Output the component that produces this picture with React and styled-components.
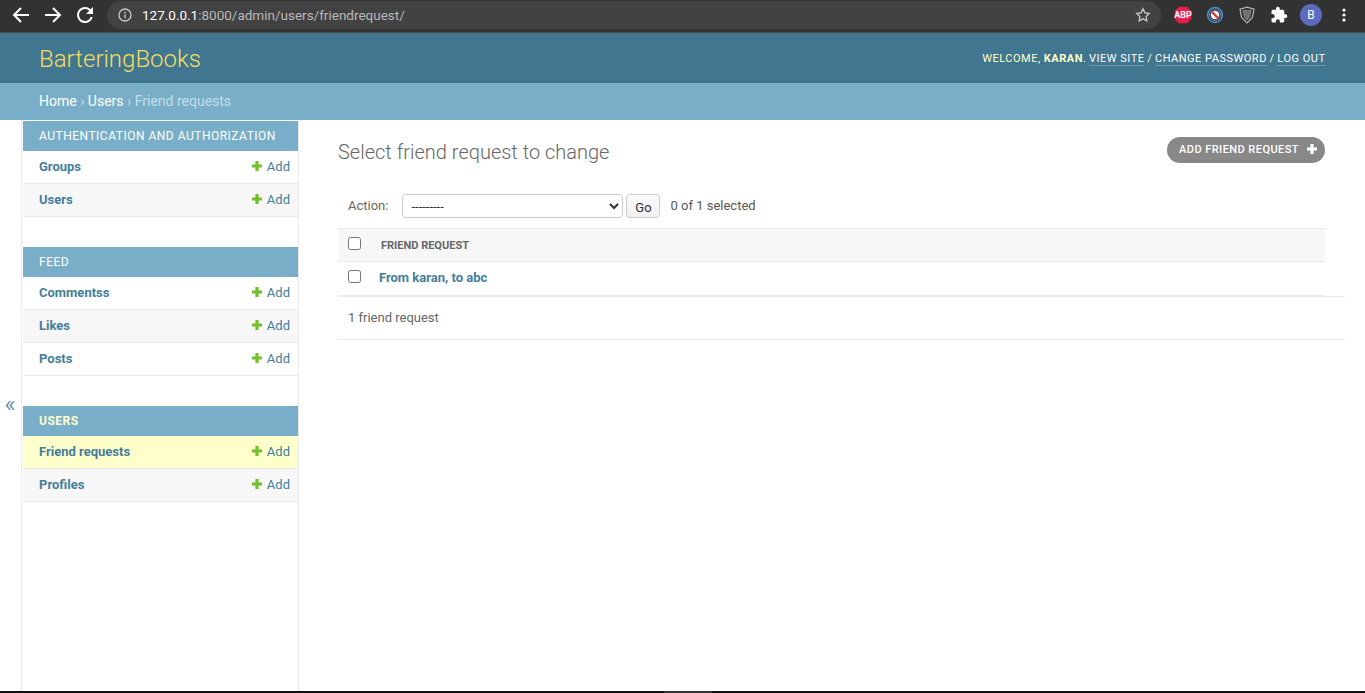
import React from "react";
import styled, { createGlobalStyle } from "styled-components";

const Global = createGlobalStyle`
  html, body { margin: 0; padding: 0; height: 100%; background: #fff; overflow: hidden; }
  body { font-family: Roboto, "Liberation Sans", sans-serif; color: #333; }
  * { box-sizing: border-box; }
`;

const Page = styled.div`
  display: flex;
  flex-direction: column;
  height: 693px;
`;

/* browser toolbar */
const ChromeBar = styled.div`
  height: 33px;
  background: #323232;
  border-bottom: 1px solid #4a4a4a;
  display: flex;
  align-items: center;
  flex: none;
`;
const NavIcons = styled.div`
  width: 107px;
  display: flex;
  align-items: center;
  gap: 8px;
  padding-left: 9px;
  margin-top: -2px;
  flex: none;
`;
const Omnibox = styled.div`
  width: 1054px;
  height: 28px;
  margin-top: -2px;
  border-radius: 14px;
  background: #424242;
  display: flex;
  align-items: center;
  padding: 0 10px 0 11px;
  flex: none;
`;
const Url = styled.div`
  flex: 1;
  margin-left: 10px;
  font: 400 13.5px Roboto, sans-serif;
  color: #b9b9b9;
  b { font-weight: 400; color: #fff; }
`;
const Extensions = styled.div`
  flex: 1;
  display: flex;
  align-items: center;
  padding-left: 13px;
  gap: 14px;
  margin-top: -2px;
`;
const Avatar = styled.div`
  width: 22px;
  height: 22px;
  margin-left: -2px;
  border-radius: 50%;
  background: #5c6bc0;
  color: #fff;
  font-size: 12px;
  display: flex;
  align-items: center;
  justify-content: center;
`;
const Dots = styled.div`
  margin-left: 6px;
  display: flex;
`;

/* django header */
const Header = styled.header`
  height: 50px;
  background: #417690;
  display: flex;
  align-items: center;
  justify-content: space-between;
  padding: 0 40px 0 39px;
  flex: none;
`;
const Brand = styled.h1`
  margin: 2px 0 0;
  font-size: 24px;
  font-weight: 300;
  color: #f5dd5d;
`;
const UserTools = styled.div`
  font-size: 11px;
  letter-spacing: 0.5px;
  text-transform: uppercase;
  white-space: nowrap;
  color: #ffc;
  strong { font-weight: 700; }
`;
const ToolLink = styled.a`
  margin: 0 -0.5px;
  color: #fff;
  border-bottom: 1px solid rgba(255, 255, 255, 0.25);
`;
const Crumbs = styled.div`
  height: 37px;
  background: #79aec8;
  padding: 0 39px 2px;
  display: flex;
  align-items: center;
  font-size: 14px;
  color: #c4dce8;
  flex: none;
  white-space: pre;
  a { color: #fff; }
`;

/* body */
const Main = styled.div`
  flex: 1;
  display: flex;
  min-height: 0;
`;
const Toggle = styled.div`
  width: 22px;
  border-right: 1px solid #eaeaea;
  flex: none;
  display: flex;
  align-items: center;
  justify-content: center;
  color: #447e9b;
  font-size: 24px;
  font-weight: 300;
  padding: 0 1px 3px 0;
`;
const Sidebar = styled.nav`
  width: 277px;
  flex: none;
  border-right: 1px solid #eaeaea;
  padding: 1px 0 0 1px;
`;
const Module = styled.section`
  margin-bottom: 30px;
`;
const Caption = styled.div`
  height: 30px;
  background: #79aec8;
  color: ${p => (p.$current ? "#ffc" : "#fff")};
  font-size: 12px;
  font-weight: ${p => (p.$current ? 700 : 400)};
  letter-spacing: 0.5px;
  text-transform: uppercase;
  display: flex;
  align-items: center;
  padding-left: 16px;
`;
const Row = styled.div`
  height: 33px;
  border-bottom: 1px solid #eaeaea;
  background: ${p => (p.$current ? "#ffc" : p.$alt ? "#f7f7f7" : "#fff")};
  display: flex;
  align-items: center;
  justify-content: space-between;
  padding: 0 8px 2px 16px;
  font-size: 13px;
`;
const RowName = styled.a`
  font-weight: 700;
  color: #447e9b;
`;
const AddLink = styled.a`
  color: #447e9b;
  display: flex;
  align-items: center;
  gap: 5px;
`;
const Content = styled.main`
  flex: 1;
  padding: 0 20px 0 39px;
`;
const TitleRow = styled.div`
  display: flex;
  justify-content: space-between;
  align-items: flex-start;
  padding: 17px 20px 0 0;
  height: 74px;
`;
const Title = styled.h1`
  margin: 3px 0 0;
  font-size: 20px;
  font-weight: 300;
  color: #666;
`;
const AddButton = styled.a`
  height: 26px;
  width: 158px;
  border-radius: 13px;
  background: #888;
  color: #fff;
  font-size: 11px;
  font-weight: 500;
  letter-spacing: 0.45px;
  display: flex;
  align-items: center;
  padding: 0 0 2px 12px;
  gap: 8px;
`;
const Actions = styled.div`
  height: 34px;
  display: flex;
  align-items: center;
  padding: 0 0 10px 10px;
  font-size: 13px;
  color: #666;
`;
const ActionLabel = styled.span`
  margin-bottom: 2px;
`;
const ActionSelect = styled.select`
  width: 221px;
  height: 24px;
  margin-left: 14px;
  padding: 0 4px;
  background: #fff;
  border: 1px solid #ccc;
  border-radius: 4px;
  font: 400 13px Roboto, sans-serif;
  color: #333;
`;
const GoButton = styled.button`
  width: 34px;
  height: 24px;
  margin-left: 3px;
  padding: 2px 0 0;
  background: linear-gradient(#fbfbfb, #f0f0f0);
  border: 1px solid #ccc;
  border-radius: 4px;
  font: 400 13px Roboto, sans-serif;
  color: #333;
`;
const Counter = styled.span`
  margin: 0 0 2px 10px;
  color: #555;
`;
const TableWrap = styled.div`
  margin: 0 20px 0 0;
`;
const HeadRow = styled.div`
  height: 34px;
  border-top: 1px solid #eaeaea;
  border-bottom: 1px solid #eaeaea;
  background: #f7f7f7;
  display: flex;
  align-items: center;
  padding-left: 10px;
  font-size: 11px;
  font-weight: 700;
  color: #666;
  input { margin-bottom: 4px; }
  span { margin-left: 20px; }
`;
const BodyRow = styled.div`
  height: 34px;
  border-bottom: 1px solid #eaeaea;
  display: flex;
  align-items: center;
  padding: 0 0 3px 10px;
  a {
    margin-left: 18px;
    font-size: 13px;
    font-weight: 700;
    color: #447e9b;
  }
`;
const Check = styled.input.attrs({ type: "checkbox" })`
  width: 13px;
  height: 13px;
  margin: 0 0 2px;
`;
const Paginator = styled.div`
  height: 44px;
  border-top: 1px solid #eaeaea;
  border-bottom: 1px solid #eaeaea;
  display: flex;
  align-items: center;
  padding: 0 0 2px 10px;
  font-size: 13px;
  color: #666;
`;
const BottomEdge = styled.div`
  height: 2px;
  flex: none;
  display: flex;
  justify-content: center;
  background: #111;
  padding-left: 11px;
  i { width: 48px; background: #333; }
`;

const Plus = ({ color = "#70bf2b", size = 10 }) => (
  <svg width={size} height={size} viewBox="0 0 10 10">
    <path d="M3.4 0h3.2v3.4H10v3.2H6.6V10H3.4V6.600H0V3.400h3.400z" fill={color} />
  </svg>
);

const Stroke = ({ d }) => (
  <svg width="24" height="24" viewBox="0 0 24 24" fill="none" stroke="#fff" strokeWidth="2">
    <path d={d} />
  </svg>
);

const ModuleBlock = ({ title, current, rows }) => (
  <Module>
    <Caption $current={current}>{title}</Caption>
    {rows.map((r, i) => (
      <Row key={r} $alt={i % 2 === 1} $current={current && i === 0}>
        <RowName>{r}</RowName>
        <AddLink><Plus />Add</AddLink>
      </Row>
    ))}
  </Module>
);

export default function App() {
  return (
    <Page>
      <Global />
      <ChromeBar>
        <NavIcons>
          <Stroke d="M20 12H5M12 5l-7 7 7 7" />
          <Stroke d="M4 12h15M12 5l7 7-7 7" />
          <svg width="24" height="24" viewBox="0 0 24 24" fill="#fff">
            <path d="M17.65 6.35A7.96 7.96 0 0 0 12 4a8 8 0 1 0 7.73 10h-2.08A6 6 0 1 1 12 6c1.66 0 3.14.69 4.22 1.78L13 11h7V4z" />
          </svg>
        </NavIcons>
        <Omnibox>
          <svg width="14" height="14" viewBox="0 0 14 14" fill="none">
            <circle cx="7" cy="7" r="6" stroke="#c8c8c8" strokeWidth="1.3" />
            <path d="M7 6.2v4M7 3.8v1.4" stroke="#c8c8c8" strokeWidth="1.4" />
          </svg>
          <Url><b>127.0.0.1</b>:8000/admin/users/friendrequest/</Url>
          <svg width="16" height="16" viewBox="0 0 24 24" fill="none" stroke="#c8c8c8" strokeWidth="2">
            <path d="M12 2.8l2.9 6 6.5.9-4.7 4.6 1.1 6.5-5.8-3.1-5.8 3.1 1.1-6.5L2.6 9.7l6.5-.9z" />
          </svg>
        </Omnibox>
        <Extensions>
          <svg width="18" height="18" viewBox="0 0 18 18">
            <path d="M5 .7h8L17.300 5v8L13 17.300H5L.7 13V5z" fill="#ed1c45" />
            <text x="9" y="12.300" textAnchor="middle" fontSize="9" fontWeight="700" fill="#fff" fontFamily="Roboto">ABP</text>
          </svg>
          <svg width="18" height="18" viewBox="0 0 18 18" fill="none">
            <circle cx="9" cy="9" r="7.400" stroke="#3f8fd6" strokeWidth="1.600" />
            <circle cx="9" cy="9" r="5.600" fill="#f4f4f4" />
            <circle cx="9" cy="9" r="4.800" stroke="#3b3b46" strokeWidth="1.200" />
            <path d="M5.500 5.500l7 7" stroke="#c8353f" strokeWidth="2.200" />
          </svg>
          <svg width="18" height="18" viewBox="0 0 18 18" fill="none">
            <path d="M9 1.200l7 2-1.600 8.300L9 17l-5.400-5.500L2 3.200z" stroke="#b4b4b4" strokeWidth="1.200" />
            <path d="M5 4.500h8l-1.500 6.500L9 14l-2.500-3z" fill="#6f6f6f" stroke="#8a8a8a" strokeWidth="0.8" />
          </svg>
          <svg width="18" height="18" viewBox="0 0 24 24" fill="#fff">
            <path d="M20.5 11H19V7a2 2 0 0 0-2-2h-4V3.500a2.500 2.500 0 0 0-5 0V5H4a2 2 0 0 0-2 2v3.800h1.500a2.700 2.700 0 0 1 0 5.400H2V20a2 2 0 0 0 2 2h3.800v-1.500a2.700 2.700 0 0 1 5.400 0V22H17a2 2 0 0 0 2-2v-4h1.500a2.500 2.500 0 0 0 0-5z" />
          </svg>
          <Avatar>B</Avatar>
          <Dots>
            <svg width="4" height="14" viewBox="0 0 4 14" fill="#fff">
              <circle cx="2" cy="2" r="1.600" />
              <circle cx="2" cy="7" r="1.600" />
              <circle cx="2" cy="12" r="1.600" />
            </svg>
          </Dots>
        </Extensions>
      </ChromeBar>

      <Header>
        <Brand>BarteringBooks</Brand>
        <UserTools>
          Welcome, <strong>karan</strong>. <ToolLink>View site</ToolLink> / <ToolLink>Change password</ToolLink> / <ToolLink>Log out</ToolLink>
        </UserTools>
      </Header>
      <Crumbs><a>Home</a> › <a>Users</a> › Friend requests</Crumbs>

      <Main>
        <Toggle>«</Toggle>
        <Sidebar>
          <ModuleBlock title="Authentication and Authorization" rows={["Groups", "Users"]} />
          <ModuleBlock title="Feed" rows={["Commentss", "Likes", "Posts"]} />
          <ModuleBlock title="Users" current rows={["Friend requests", "Profiles"]} />
        </Sidebar>
        <Content>
          <TitleRow>
            <Title>Select friend request to change</Title>
            <AddButton>ADD FRIEND REQUEST <Plus color="#fff" /></AddButton>
          </TitleRow>
          <Actions>
            <ActionLabel>Action:</ActionLabel>
            <ActionSelect defaultValue="">
              <option value="">---------</option>
            </ActionSelect>
            <GoButton>Go</GoButton>
            <Counter>0 of 1 selected</Counter>
          </Actions>
          <TableWrap>
            <HeadRow><Check /><span>FRIEND REQUEST</span></HeadRow>
            <BodyRow><Check /><a>From karan, to abc</a></BodyRow>
          </TableWrap>
          <Paginator>1 friend request</Paginator>
        </Content>
      </Main>
      <BottomEdge><i /></BottomEdge>
    </Page>
  );
}
